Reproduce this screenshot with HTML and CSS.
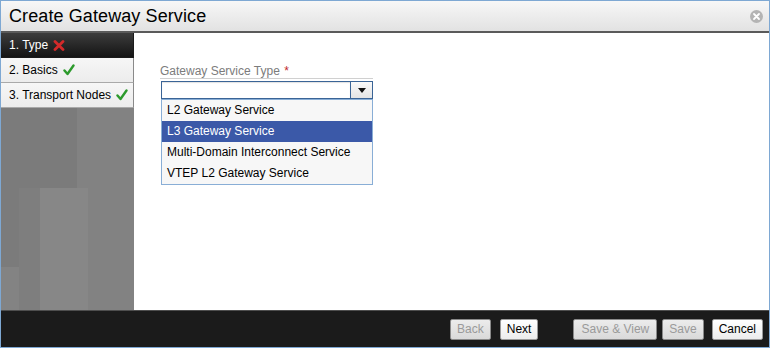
FILE: index.html
```html
<!DOCTYPE html>
<html>
<head>
  <title>Create Gateway Service</title>
  <meta charset="UTF-8">
  <link rel="stylesheet" href="styles.css">
</head>
<body>
  <div class="dialog">
    <div class="titlebar">
      <h1>Create Gateway Service</h1>
      <svg class="close" width="13" height="13" viewBox="0 0 13 13">
        <circle cx="6.5" cy="6.5" r="6.5" fill="#b4b4b4"/>
        <path d="M4 4 L9 9 M9 4 L4 9" stroke="#fff" stroke-width="1.8" stroke-linecap="round"/>
      </svg>
    </div>

    <div class="main">
      <div class="steps">
        <div class="step active">1. Type
          <svg class="mark" width="12" height="11" viewBox="0 0 12 11">
            <path d="M2 1.5 L10 9.5 M10 1.5 L2 9.5" stroke="#d42a2a" stroke-width="2.8" stroke-linecap="round"/>
          </svg>
        </div>
        <div class="step">2. Basics
          <svg class="mark" width="12" height="12" viewBox="0 0 12 12">
            <path d="M1.5 6.5 L4.5 10 L10.5 1.5" fill="none" stroke="#2c9a2c" stroke-width="2.4" stroke-linecap="round" stroke-linejoin="round"/>
          </svg>
        </div>
        <div class="step">3. Transport Nodes
          <svg class="mark" width="12" height="12" viewBox="0 0 12 12">
            <path d="M1.5 6.5 L4.5 10 L10.5 1.5" fill="none" stroke="#2c9a2c" stroke-width="2.4" stroke-linecap="round" stroke-linejoin="round"/>
          </svg>
        </div>
        <div class="skyline"></div>
      </div>

      <div class="content">
        <div class="field">
          <div class="field-label">Gateway Service Type <span class="req">*</span></div>
          <div class="select">
            <div class="select-value"></div>
            <div class="select-arrow"><span class="tri"></span></div>
          </div>
          <ul class="options">
            <li>L2 Gateway Service</li>
            <li class="selected">L3 Gateway Service</li>
            <li>Multi-Domain Interconnect Service</li>
            <li>VTEP L2 Gateway Service</li>
          </ul>
        </div>
      </div>
    </div>

    <div class="footer">
      <button class="btn disabled back">Back</button>
      <button class="btn next">Next</button>
      <button class="btn disabled saveview">Save &amp; View</button>
      <button class="btn disabled save">Save</button>
      <button class="btn cancel">Cancel</button>
    </div>
  </div>
</body>
</html>
```

FILE: styles.css
```css
html, body {
  margin: 0;
  padding: 0;
}
body {
  font-family: "Liberation Sans", Arial, sans-serif;
  font-size: 12px;
  color: #000;
  background: #fff;
}
.dialog {
  width: 770px;
  height: 348px;
  box-sizing: border-box;
  border: 1px solid #7ea8d3;
  display: flex;
  flex-direction: column;
}
.titlebar {
  height: 30px;
  border-bottom: 2px solid #5a5a5a;
  background: linear-gradient(#f7f7f7, #e2e2e2);
  display: flex;
  align-items: center;
  justify-content: space-between;
  padding: 0 6px 0 8px;
}
.titlebar h1 {
  margin: 0;
  font-size: 18px;
  font-weight: normal;
  letter-spacing: 0.1px;
}
.close {
  display: block;
  margin-top: 1px;
}
.main {
  flex: 1;
  display: flex;
  min-height: 0;
}
.steps {
  width: 133px;
  display: flex;
  flex-direction: column;
}
.step {
  height: 24px;
  border-bottom: 1px solid #a9a9a9;
  border-right: 1px solid #8a8a8a;
  background: linear-gradient(#f6f6f6, #ececec);
  display: flex;
  align-items: center;
  padding-left: 8px;
  gap: 5px;
  font-size: 12px;
}
.step.active {
  background: linear-gradient(#3c3c3c, #141414);
  color: #fff;
  border-bottom-color: #1a1a1a;
  border-right-color: #1a1a1a;
}
.mark {
  display: block;
}
.skyline {
  flex: 1;
  background:
    linear-gradient(#878787, #878787) 39px 80px / 48px 300px no-repeat,
    linear-gradient(#828282, #828282) 87px 80px / 10px 300px no-repeat,
    linear-gradient(#838383, #838383) 0 159px / 18px 300px no-repeat,
    linear-gradient(#7e7e7e, #7e7e7e) 18px 80px / 21px 300px no-repeat,
    linear-gradient(#828282, #828282) 76px 0 / 57px 300px no-repeat,
    #7b7b7b;
}
.content {
  flex: 1;
  background: #fff;
  padding: 31px 0 0 26px;
}
.field {
  width: 213px;
}
.field-label {
  color: #7c7c7c;
  font-size: 12px;
  line-height: 14px;
  border-bottom: 1px solid #d0d0d0;
  padding-bottom: 0;
}
.req {
  color: #c0282c;
  margin-left: 1px;
}
.select {
  margin: 2px 0 0 1px;
  height: 18px;
  box-sizing: border-box;
  border: 1px solid #3a6496;
  display: flex;
  background: #fff;
}
.select-value {
  flex: 1;
  box-shadow: inset 0 1px 1px rgba(0, 0, 0, 0.12);
}
.select-arrow {
  width: 21px;
  border-left: 1px solid #3a6496;
  background: linear-gradient(#fafafa, #e4e4e4);
  display: flex;
  align-items: center;
  justify-content: center;
}
.tri {
  width: 0;
  height: 0;
  border-left: 4px solid transparent;
  border-right: 4px solid transparent;
  border-top: 5px solid #111;
}
.options {
  list-style: none;
  margin: 0 0 0 1px;
  padding: 0;
  border: 1px solid #89aed6;
  background: #f7f7f7;
}
.options li {
  height: 21px;
  line-height: 21px;
  padding-left: 5px;
}
.options li.selected {
  background: #3b59a8;
  color: #fff;
}
.footer {
  height: 36px;
  border-top: 1px solid #4e4e4e;
  background: #1b1b1b;
  display: flex;
  align-items: center;
  justify-content: flex-end;
  padding-right: 6px;
}
.btn {
  height: 21px;
  box-sizing: border-box;
  font-family: inherit;
  font-size: 12px;
  padding: 0 6px;
  border: 1px solid #9a9a9a;
  border-radius: 2px;
  background: linear-gradient(#ffffff, #ececec);
  color: #000;
  margin-left: 8px;
}
.btn.disabled {
  background: linear-gradient(#ececec, #d9d9d9);
  color: #9a9a9a;
  border-color: #8a8a8a;
}
.btn.next {
  margin-left: 9px;
}
.btn.saveview {
  margin-left: 35px;
  padding: 0 7px;
}
.btn.save {
  margin-left: 5px;
}
.btn.cancel {
  margin-left: 8px;
}
```
